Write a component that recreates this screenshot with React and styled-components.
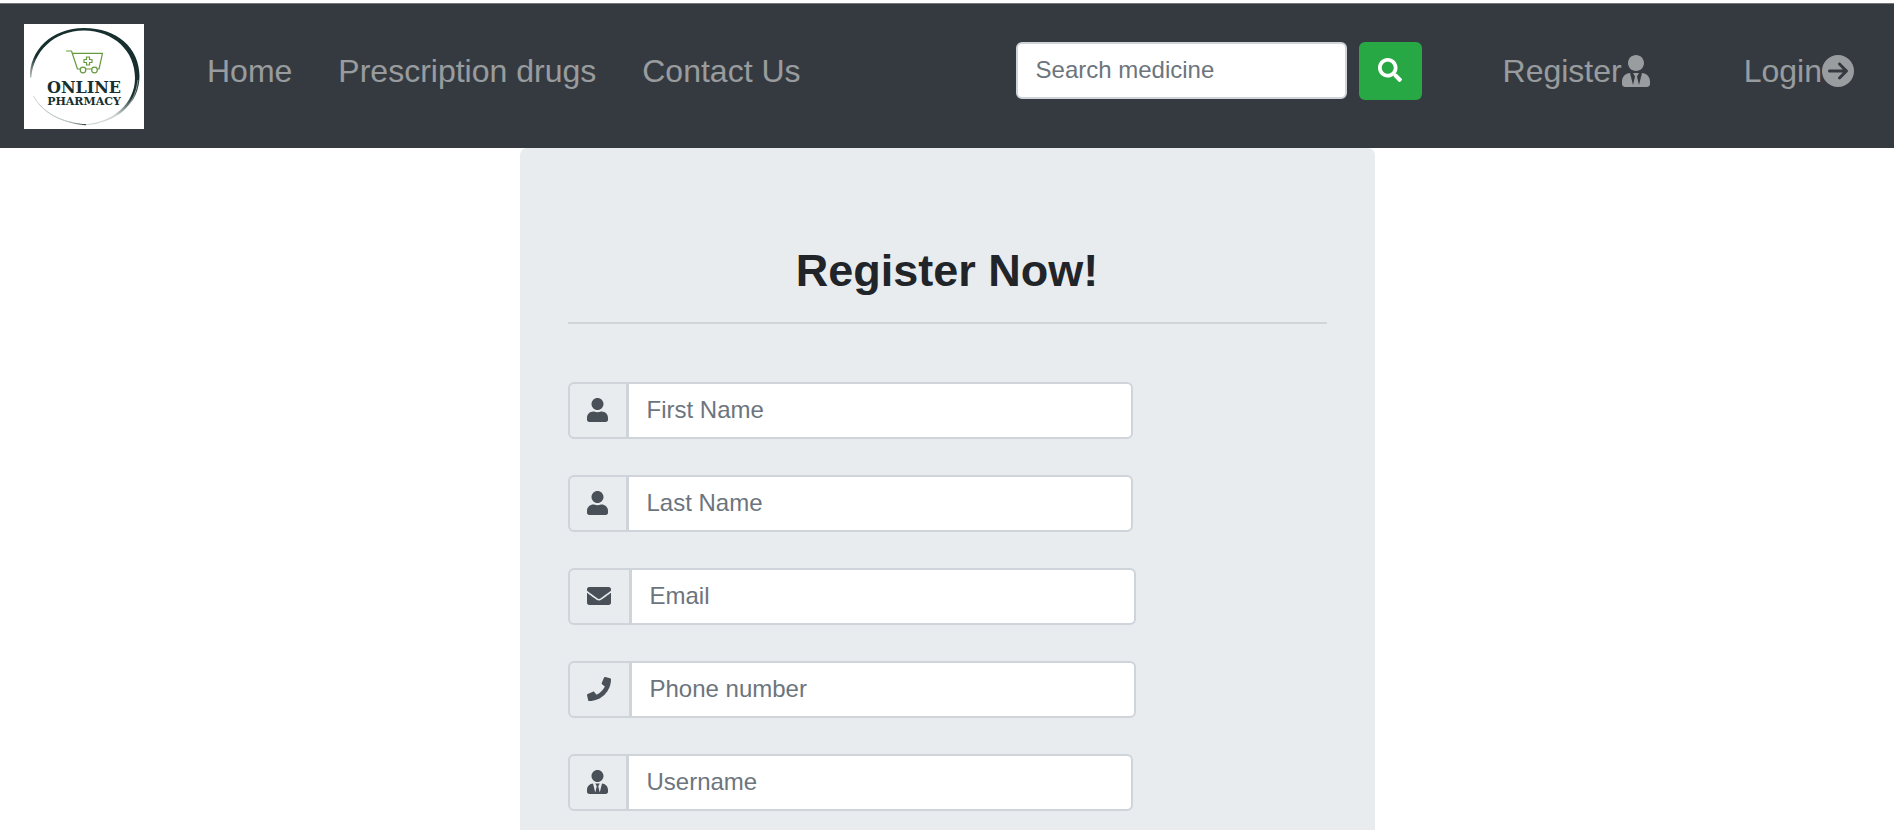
import React from "react";
import styled, { createGlobalStyle } from "styled-components";
import { FaEnvelope, FaPhone, FaSearch, FaUser, FaUserTie } from "react-icons/fa";
import { FaCircleArrowRight } from "react-icons/fa6";

const GlobalStyle = createGlobalStyle`
  *, *::before, *::after { box-sizing: border-box; }
  body {
    margin: 0;
    background: #fff;
    color: #212529;
    font-family: "Liberation Sans", Arial, sans-serif;
    font-size: 24px;
    line-height: 36px;
  }
`;

const Page = styled.div`
  height: 100vh;
  overflow: hidden;
  border-top: 3px solid #fdfdfd;
`;

const Navbar = styled.header`
  display: flex;
  align-items: center;
  padding: 20px 40px 19px 24px;
  background: #343a40;
  border-top: 1px solid #73777b;
`;

const Brand = styled.a`
  display: block;
  width: 120px;
  height: 105px;
  margin-right: 63px;
  background: #fff;

  svg { display: block; }
`;

const NavList = styled.nav`
  display: flex;
  gap: ${(p) => p.$gap};
  margin-bottom: 11px;
`;

const NavLink = styled.a`
  display: flex;
  align-items: center;
  color: rgba(255, 255, 255, 0.5);
  font-size: 32px;
  line-height: 48px;
  text-decoration: none;
  white-space: nowrap;
`;

const SearchForm = styled.form`
  display: flex;
  gap: 12px;
  margin: 0 81px 11px auto;
`;

const TextInput = styled.input`
  height: 57px;
  padding: 0 18px 2px;
  border: 2px solid #ced4da;
  border-radius: 6px;
  background: #fff;
  color: #495057;
  font: inherit;
  outline: none;

  &::placeholder { color: #6c757d; opacity: 1; }
`;

const SearchInput = styled(TextInput)`
  width: 331px;
`;

const SearchButton = styled.button`
  display: flex;
  align-items: center;
  justify-content: center;
  width: 63px;
  height: 58px;
  padding: 0 0 2px;
  border: 0;
  border-radius: 6px;
  background: #28a745;
  color: #fff;
`;

const Card = styled.main`
  max-width: 855px;
  margin: 0 auto;
  padding: 96px 48px;
  border-radius: 7px;
  background: #e9ecef;
`;

const Title = styled.h1`
  margin: 0;
  padding-bottom: 24px;
  border-bottom: 2px solid #d1d5d8;
  font-size: 45px;
  line-height: 54px;
  text-align: center;
`;

const RegisterForm = styled.form`
  display: flex;
  flex-direction: column;
  gap: 36px;
  margin-top: 58px;
`;

const InputGroup = styled.div`
  display: flex;
`;

const Addon = styled.label`
  display: flex;
  align-items: center;
  padding: 0 18px 2px 17px;
  border: 2px solid #ced4da;
  border-radius: 6px 0 0 6px;
  background: #e9ecef;
  color: #495057;
`;

const GroupInput = styled(TextInput)`
  flex: 0 0 calc(100% * 2 / 3);
  min-width: 0;
  margin-left: -1px;
  border-radius: 0 6px 6px 0;
`;

const GlyphBox = styled.span`
  display: block;
  flex: none;
  width: ${(p) => p.$width}px;
  height: ${(p) => p.$height}px;

  svg {
    display: block;
    width: 100%;
    height: 100%;
  }
`;

function Glyph({ icon: Icon, width = 24, height = 24 }) {
  return (
    <GlyphBox $width={width} $height={height}>
      <Icon aria-hidden="true" />
    </GlyphBox>
  );
}

const LogoText = styled.text`
  fill: #17302f;
  font-family: "DejaVu Serif", serif;
  font-size: ${(p) => p.$size};
  font-weight: bold;
  text-anchor: middle;
`;

function Logo() {
  return (
    <svg width="120" height="105" viewBox="0 0 120 105" role="img" aria-label="Online Pharmacy">
      <defs>
        <linearGradient id="ring" gradientUnits="userSpaceOnUse" x1="5" y1="56" x2="14" y2="34">
          <stop offset="0" stopColor="#17302f" stopOpacity="0.2" />
          <stop offset="1" stopColor="#17302f" />
        </linearGradient>
        <linearGradient id="tail" gradientUnits="userSpaceOnUse" x1="9" y1="72" x2="62" y2="100">
          <stop offset="0" stopColor="#8a9694" stopOpacity="0.4" />
          <stop offset="0.7" stopColor="#8a9694" stopOpacity="0.6" />
          <stop offset="1" stopColor="#17302f" />
        </linearGradient>
      </defs>
      <path
        d="M6 54C5 26 28 4 60 4C93 4 115.500 24 115.500 52C115.500 79 93 100 60 101.300L60 100.300C88 99 111 80 111 54C111 27 90 7 60 6.500C30 6.500 9 28 7.500 53Z"
        fill="url(#ring)"
      />
      <path d="M114 56C111 82 94 96 75 99" fill="none" stroke="#fff" strokeWidth="0.5" />
      <path d="M9.500 72C18 88 37 99 62 100.800" fill="none" stroke="url(#tail)" strokeWidth="1" />
      <path d="M15 80C24 91 38 97 50 98.500" fill="none" stroke="#b6bebc" strokeWidth="0.5" />
      <g fill="none" stroke="#67993f" strokeWidth="1.200" strokeLinejoin="round" strokeLinecap="round">
        <path d="M42.500 27H47.500L53.500 45H56M62 45H67.500M73.500 45H75L78.500 29.300H48.300" />
        <circle cx="59" cy="46" r="2.800" />
        <circle cx="70.500" cy="46" r="2.800" />
        <path d="M62.500 33h3v2.500h2.500v3h-2.500v2.500h-3v-2.500h-2.500v-3h2.500z" />
      </g>
      <LogoText x="60" y="69" $size="16px">ONLINE</LogoText>
      <LogoText x="60" y="81" $size="11px">PHARMACY</LogoText>
    </svg>
  );
}

const fields = [
  { id: "first-name", label: "First Name", type: "text", icon: FaUser, width: 21 },
  { id: "last-name", label: "Last Name", type: "text", icon: FaUser, width: 21 },
  { id: "email", label: "Email", type: "email", icon: FaEnvelope },
  { id: "phone", label: "Phone number", type: "tel", icon: FaPhone },
  { id: "username", label: "Username", type: "text", icon: FaUserTie, width: 21 },
];

export default function App() {
  return (
    <Page>
      <GlobalStyle />
      <Navbar>
        <Brand href="#"><Logo /></Brand>
        <NavList $gap="46px" aria-label="Main">
          <NavLink href="#">Home</NavLink>
          <NavLink href="#">Prescription drugs</NavLink>
          <NavLink href="#">Contact Us</NavLink>
        </NavList>
        <SearchForm role="search">
          <SearchInput type="search" placeholder="Search medicine" aria-label="Search medicine" />
          <SearchButton type="submit" aria-label="Search">
            <Glyph icon={FaSearch} />
          </SearchButton>
        </SearchForm>
        <NavList $gap="94px" aria-label="Account">
          <NavLink href="#">
            Register<Glyph icon={FaUserTie} width={28} height={32} />
          </NavLink>
          <NavLink href="#">
            Login<Glyph icon={FaCircleArrowRight} width={32} height={32} />
          </NavLink>
        </NavList>
      </Navbar>
      <Card>
        <Title>Register Now!</Title>
        <RegisterForm>
          {fields.map((f) => (
            <InputGroup key={f.id}>
              <Addon htmlFor={f.id} aria-label={f.label}>
                <Glyph icon={f.icon} width={f.width} />
              </Addon>
              <GroupInput id={f.id} name={f.id} type={f.type} placeholder={f.label} />
            </InputGroup>
          ))}
        </RegisterForm>
      </Card>
    </Page>
  );
}
